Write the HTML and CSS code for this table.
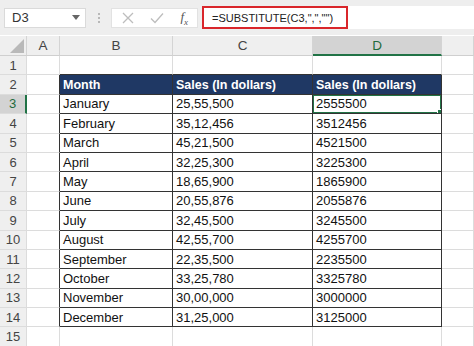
FILE: index.html
```html
<!DOCTYPE html>
<html lang="en">
<head>
    <meta charset="UTF-8">
    <meta name="viewport" content="width=device-width, initial-scale=1.0">
    <title>SUBSTITUTE</title>
    <link rel="stylesheet" href="styles.css">
</head>
<body>
    <div class="toolbar">
        <div class="name-box">
            <span>D3</span>
            <svg class="caret" width="8" height="5" viewBox="0 0 8 5"><path d="M0 0h8L4 5z" fill="#666"/></svg>
        </div>
        <div class="dots"><i></i><i></i><i></i></div>
        <div class="buttons">
            <svg width="12" height="12" viewBox="0 0 12 12"><path d="M1 1l10 10M11 1L1 11" stroke="#bdbdbd" stroke-width="1.3"/></svg>
            <svg width="14" height="12" viewBox="0 0 14 12"><path d="M1 6.5l4 4L13 1.5" stroke="#bdbdbd" stroke-width="1.3" fill="none"/></svg>
            <span class="fx">f<sub>x</sub></span>
        </div>
        <div class="formula">
            <span class="formula-text">=SUBSTITUTE(C3,",","")</span>
        </div>
    </div>
    <table class="sheet">
        <colgroup>
            <col style="width:27px">
            <col style="width:33px">
            <col style="width:113px">
            <col style="width:140px">
            <col style="width:129px">
            <col>
        </colgroup>
        <tr class="col-heads">
            <th class="corner"><span class="tri"></span></th>
            <th>A</th><th>B</th><th>C</th><th class="active-col">D</th><th></th>
        </tr>
        <tr>
            <th class="rh">1</th><td></td><td class="above"></td><td class="above"></td><td class="above"></td><td></td>
        </tr>
        <tr class="head">
            <th class="rh">2</th><td class="before"></td><td class="t">Month</td><td class="t">Sales (In dollars)</td><td class="t">Sales (In dollars)</td><td></td>
        </tr>
        <tr>
            <th class="rh active-row">3</th><td class="before"></td><td class="t">January</td><td class="t">25,55,500</td><td class="t selected">2555500</td><td></td>
        </tr>
        <tr>
            <th class="rh">4</th><td class="before"></td><td class="t">February</td><td class="t">35,12,456</td><td class="t">3512456</td><td></td>
        </tr>
        <tr>
            <th class="rh">5</th><td class="before"></td><td class="t">March</td><td class="t">45,21,500</td><td class="t">4521500</td><td></td>
        </tr>
        <tr>
            <th class="rh">6</th><td class="before"></td><td class="t">April</td><td class="t">32,25,300</td><td class="t">3225300</td><td></td>
        </tr>
        <tr>
            <th class="rh">7</th><td class="before"></td><td class="t">May</td><td class="t">18,65,900</td><td class="t">1865900</td><td></td>
        </tr>
        <tr>
            <th class="rh">8</th><td class="before"></td><td class="t">June</td><td class="t">20,55,876</td><td class="t">2055876</td><td></td>
        </tr>
        <tr>
            <th class="rh">9</th><td class="before"></td><td class="t">July</td><td class="t">32,45,500</td><td class="t">3245500</td><td></td>
        </tr>
        <tr>
            <th class="rh">10</th><td class="before"></td><td class="t">August</td><td class="t">42,55,700</td><td class="t">4255700</td><td></td>
        </tr>
        <tr>
            <th class="rh">11</th><td class="before"></td><td class="t">September</td><td class="t">22,35,500</td><td class="t">2235500</td><td></td>
        </tr>
        <tr>
            <th class="rh">12</th><td class="before"></td><td class="t">October</td><td class="t">33,25,780</td><td class="t">3325780</td><td></td>
        </tr>
        <tr>
            <th class="rh">13</th><td class="before"></td><td class="t">November</td><td class="t">30,00,000</td><td class="t">3000000</td><td></td>
        </tr>
        <tr>
            <th class="rh">14</th><td class="before"></td><td class="t">December</td><td class="t">31,25,000</td><td class="t">3125000</td><td></td>
        </tr>
        <tr>
            <th class="rh">15</th><td></td><td></td><td></td><td></td><td></td>
        </tr>
    </table>
</body>
</html>
```
FILE: styles.css
```css
body {
    margin: 0;
    padding: 0;
    font-family: "Liberation Sans", Arial, sans-serif;
    background-color: #ffffff;
    overflow: hidden;
}
.toolbar {
    display: flex;
    align-items: center;
    height: 35px;
    background-color: #eeeeee;
    padding-left: 4px;
    box-sizing: border-box;
}
.name-box {
    display: flex;
    align-items: center;
    justify-content: space-between;
    width: 82px;
    height: 20px;
    box-sizing: border-box;
    background-color: #ffffff;
    border: 1px solid #dadada;
    padding: 0 5px 0 7px;
    font-size: 13px;
    color: #333333;
}
.dots {
    display: flex;
    flex-direction: column;
    gap: 2px;
    margin: 0 11px 0 12px;
}
.dots i {
    display: block;
    width: 2px;
    height: 2px;
    background-color: #b8b8b8;
}
.buttons {
    display: flex;
    align-items: center;
    justify-content: space-between;
    width: 87px;
    height: 20px;
    box-sizing: border-box;
    background-color: #ffffff;
    border: 1px solid #e2e2e2;
    padding: 0 9px 0 10px;
}
.fx {
    font-family: "Liberation Serif", serif;
    font-style: italic;
    font-size: 13px;
    color: #555555;
}
.fx sub {
    font-size: 9px;
}
.formula {
    flex: 1;
    height: 23px;
    margin-left: 4px;
    background-color: #ffffff;
    display: flex;
    align-items: center;
}
.formula-text {
    display: flex;
    align-items: center;
    height: 23px;
    box-sizing: border-box;
    width: 146px;
    border: 2px solid #d9262b;
    padding-left: 8px;
    font-size: 11px;
    color: #222222;
}
.sheet {
    border-collapse: separate;
    border-spacing: 0;
    table-layout: fixed;
    width: 474px;
    margin-top: 1px;
    font-size: 13px;
}
.sheet th,
.sheet td {
    padding: 0;
    border-right: 1px solid #dcdcdc;
    border-bottom: 1px solid #dcdcdc;
    height: 18.4px;
    white-space: nowrap;
    overflow: hidden;
}
.sheet td {
    padding-left: 3px;
    color: #111111;
}
.col-heads th {
    height: 18px;
    background-color: #efefef;
    font-weight: normal;
    font-size: 13.5px;
    color: #444444;
    border-right-color: #d4d4d4;
    border-bottom-color: #cfcfcf;
}
.col-heads th.active-col {
    background-color: #d3d3d3;
    color: #1f6b3d;
    border-bottom: 2px solid #217346;
}
.corner {
    position: relative;
}
.tri {
    position: absolute;
    right: 2px;
    bottom: 2px;
    width: 0;
    height: 0;
    border-left: 14px solid transparent;
    border-bottom: 14px solid #b9b9b9;
}
.rh {
    background-color: #efefef;
    font-weight: normal;
    color: #444444;
    text-align: center;
}
.rh.active-row {
    background-color: #d3d3d3;
    color: #1f6b3d;
    border-right: 2px solid #217346;
}
.above {
    border-bottom-color: #333333 !important;
}
.before {
    border-right-color: #333333 !important;
}
.t {
    border-right-color: #333333 !important;
    border-bottom-color: #333333 !important;
}
.head .t {
    background-color: #1f3864;
    color: #ffffff;
    font-weight: bold;
    font-size: 12.5px;
}
.selected {
    position: relative;
}
.selected::before {
    content: "";
    position: absolute;
    left: -1px;
    top: -1px;
    right: -1px;
    bottom: -1px;
    border: 2px solid #217346;
}
.selected::after {
    content: "";
    position: absolute;
    right: -3px;
    bottom: -3px;
    width: 5px;
    height: 5px;
    background-color: #217346;
    border: 1px solid #ffffff;
}
```
